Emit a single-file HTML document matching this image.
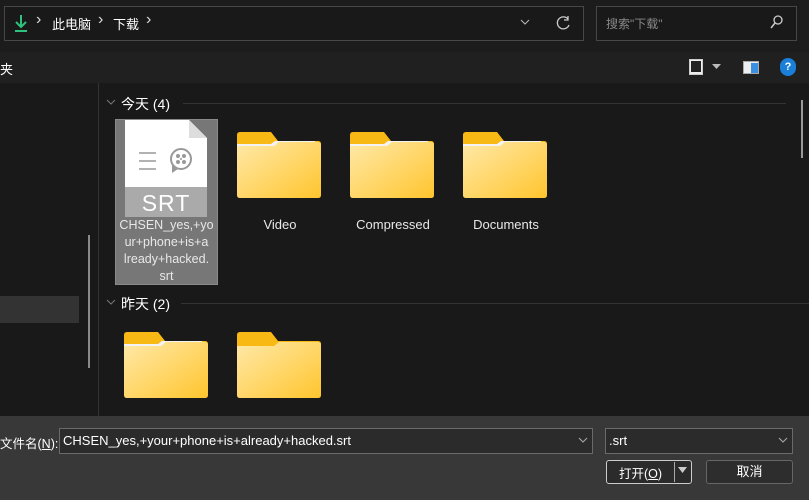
<!DOCTYPE html>
<html><head><meta charset="utf-8"><style>
*{margin:0;padding:0;box-sizing:border-box}
body{width:809px;height:500px;background:#191919;font-family:"Liberation Sans","Noto Sans CJK SC",sans-serif;color:#fff;position:relative;overflow:hidden;font-size:13px}
.a{position:absolute}
.folder{position:absolute;width:84px;height:66px}
.lbl{position:absolute;font-size:13px;color:#e8e8e8;text-align:center}
.ch{position:absolute;font-size:16px;color:#ddd;top:11px}
</style></head><body>
<svg width="0" height="0" style="position:absolute"><defs><linearGradient id="g" x1="0" y1="0" x2="1" y2="1"><stop offset="0" stop-color="#ffe9a8"/><stop offset="1" stop-color="#ffc52e"/></linearGradient></defs></svg>
<div class="a" style="left:0;top:0;width:809px;height:52px;background:#1c1c1c"></div>
<div class="a" style="left:4px;top:6px;width:580px;height:35px;border:1px solid #474747;background:#191919"></div>
<svg class="a" style="left:13px;top:13px" width="16" height="20"><path d="M8 2v11M3 9l5 5 5-5" stroke="#2ec27e" stroke-width="2" fill="none"/><path d="M2 18h12" stroke="#2ec27e" stroke-width="2"/></svg>
<div class="ch" style="left:36px">›</div>
<div class="a" style="left:52px;top:14px;font-size:13px">此电脑</div>
<div class="ch" style="left:98px">›</div>
<div class="a" style="left:113px;top:14px;font-size:13px">下载</div>
<div class="ch" style="left:146px">›</div>
<svg class="a" style="left:520px;top:19px" width="10" height="8"><path d="M1 1l4 4 4-4" stroke="#bbb" fill="none"/></svg>
<svg class="a" style="left:556px;top:15px" width="16" height="16"><path d="M12 4A6 6 0 1 0 13 10" stroke="#ccc" fill="none" stroke-width="1.3"/><path d="M12 1v4H8" stroke="#ccc" fill="none" stroke-width="1.3"/></svg>
<div class="a" style="left:596px;top:6px;width:201px;height:35px;border:1px solid #474747;background:#191919"></div>
<div class="a" style="left:606px;top:15px;font-size:12px;color:#888">搜索"下载"</div>
<svg class="a" style="left:770px;top:15px" width="14" height="14"><circle cx="8" cy="5" r="4" stroke="#ccc" fill="none" stroke-width="1.3"/><path d="M5 8l-4 5" stroke="#ccc" stroke-width="1.5"/></svg>
<div class="a" style="left:0;top:52px;width:809px;height:31px;background:#202020"></div>
<div class="a" style="left:0;top:59px;font-size:13px">夹</div>
<div class="a" style="left:689px;top:59px;width:14px;height:16px;border:1px solid #ccc;background:#eee"><div style="margin:1px;height:11px;background:#222"></div></div>
<svg class="a" style="left:712px;top:64px" width="10" height="6"><path d="M0 0h9L4.5 5z" fill="#bbb"/></svg>
<div class="a" style="left:743px;top:61px;width:16px;height:13px;background:#eee;border:1px solid #aaa"><div style="position:absolute;left:7px;top:1px;width:7px;height:10px;background:#3b8fe0"></div></div>
<div class="a" style="left:780px;top:58px;width:16px;height:18px;border-radius:8px;background:#1a7fd8;font-size:11px;text-align:center;line-height:18px;font-weight:bold">?</div>
<div class="a" style="left:98px;top:83px;width:1px;height:333px;background:#333"></div>
<div class="a" style="left:88px;top:235px;width:2px;height:133px;background:#8a8a8a"></div>
<div class="a" style="left:0;top:296px;width:79px;height:27px;background:#333"></div>
<div class="a" style="left:801px;top:100px;width:2px;height:58px;background:#999"></div>
<svg class="a" style="left:106px;top:99px" width="10" height="8"><path d="M1 1l4 4 4-4" stroke="#777" fill="none"/></svg>
<div class="a" style="left:121px;top:94px;font-size:14px">今天 (4)</div>
<div class="a" style="left:183px;top:103px;width:603px;height:1px;background:#333"></div>
<svg class="a" style="left:106px;top:299px" width="10" height="8"><path d="M1 1l4 4 4-4" stroke="#777" fill="none"/></svg>
<div class="a" style="left:121px;top:294px;font-size:14px">昨天 (2)</div>
<div class="a" style="left:181px;top:303px;width:628px;height:1px;background:#333"></div>
<!-- selected file -->
<div class="a" style="left:115px;top:119px;width:103px;height:166px;background:#777;border:1px solid #8a8a8a"></div>
<svg class="a" style="left:125px;top:120px" width="82" height="97"><path d="M0 0h64l18 18v49H0z" fill="#fff"/><path d="M64 0v18h18z" fill="#ddd"/><rect x="0" y="67" width="82" height="30" fill="#aaa"/><path d="M14 33h17M14 41h17M14 49h17" stroke="#999" stroke-width="1.6"/><circle cx="56" cy="39" r="10" fill="none" stroke="#999" stroke-width="2"/><path d="M47 43v10l6-4" fill="#999"/><circle cx="53" cy="36" r="2" fill="#999"/><circle cx="59" cy="36" r="2" fill="#999"/><circle cx="53" cy="42" r="2" fill="#999"/><circle cx="59" cy="42" r="2" fill="#999"/><circle cx="56" cy="39" r="1" fill="#999"/><text x="41" y="91" font-size="23" fill="#fff" text-anchor="middle" font-family="Liberation Sans" letter-spacing="1">SRT</text></svg>
<div class="lbl" style="left:116px;top:217px;width:101px;line-height:17px;font-size:12.5px">CHSEN_yes,+yo ur+phone+is+a lready+hacked. srt</div>
<svg class="folder" style="left:237px;top:132px" viewBox="0 0 84 66"><path d="M0 3q0-3 3-3h31l7 9h40q3 0 3 3v8H0z" fill="#f9b914"/><path d="M0 12h34l4-3h40v10H0z" fill="#f3f3f3"/><path d="M0 14h37l5-4h39q3 0 3 3v50q0 3-3 3H3q-3 0-3-3z" fill="url(#g)"/></svg>
<svg class="folder" style="left:350px;top:132px" viewBox="0 0 84 66"><path d="M0 3q0-3 3-3h31l7 9h40q3 0 3 3v8H0z" fill="#f9b914"/><path d="M0 12h34l4-3h40v10H0z" fill="#f3f3f3"/><path d="M0 14h37l5-4h39q3 0 3 3v50q0 3-3 3H3q-3 0-3-3z" fill="url(#g)"/></svg>
<svg class="folder" style="left:463px;top:132px" viewBox="0 0 84 66"><path d="M0 3q0-3 3-3h31l7 9h40q3 0 3 3v8H0z" fill="#f9b914"/><path d="M0 12h34l4-3h40v10H0z" fill="#f3f3f3"/><path d="M0 14h37l5-4h39q3 0 3 3v50q0 3-3 3H3q-3 0-3-3z" fill="url(#g)"/></svg>
<svg class="folder" style="left:124px;top:332px" viewBox="0 0 84 66"><path d="M0 3q0-3 3-3h31l7 9h40q3 0 3 3v8H0z" fill="#f9b914"/><path d="M0 12h34l4-3h40v10H0z" fill="#f3f3f3"/><path d="M0 14h37l5-4h39q3 0 3 3v50q0 3-3 3H3q-3 0-3-3z" fill="url(#g)"/></svg>
<svg class="folder" style="left:237px;top:332px" viewBox="0 0 84 66"><path d="M0 3q0-3 3-3h31l7 9h40q3 0 3 3v8H0z" fill="#f9b914"/><path d="M0 14h37l5-4h39q3 0 3 3v50q0 3-3 3H3q-3 0-3-3z" fill="url(#g)"/></svg>
<div class="lbl" style="left:240px;top:217px;width:80px">Video</div>
<div class="lbl" style="left:343px;top:217px;width:100px">Compressed</div>
<div class="lbl" style="left:456px;top:217px;width:100px">Documents</div>
<!-- bottom -->
<div class="a" style="left:0;top:416px;width:809px;height:84px;background:#383838"></div>
<div class="a" style="left:0;top:433px;font-size:12.5px">文件名(<u>N</u>):</div>
<div class="a" style="left:59px;top:428px;width:534px;height:26px;border:1px solid #6a6a6a;background:#2b2b2b"></div>
<div class="a" style="left:63px;top:433px;font-size:13px">CHSEN_yes,+your+phone+is+already+hacked.srt</div>
<svg class="a" style="left:578px;top:437px" width="10" height="8"><path d="M1 1l4 4 4-4" stroke="#aaa" fill="none"/></svg>
<div class="a" style="left:605px;top:428px;width:188px;height:26px;border:1px solid #6a6a6a;background:#2b2b2b"></div>
<div class="a" style="left:609px;top:433px;font-size:13px">.srt</div>
<svg class="a" style="left:778px;top:437px" width="10" height="8"><path d="M1 1l4 4 4-4" stroke="#aaa" fill="none"/></svg>
<div class="a" style="left:606px;top:460px;width:86px;height:24px;border:1px solid #ccc;border-radius:3px;background:#2b2b2b"></div>
<div class="a" style="left:619px;top:463px;font-size:12.5px">打开(<u>O</u>)</div>
<div class="a" style="left:674px;top:462px;width:1px;height:20px;background:#aaa"></div>
<svg class="a" style="left:678px;top:467px" width="10" height="7"><path d="M0 0h9L4.5 6z" fill="#ccc"/></svg>
<div class="a" style="left:706px;top:460px;width:87px;height:24px;border:1px solid #666;border-radius:3px;background:#2d2d2d;text-align:center;line-height:22px;font-size:13px">取消</div>
</body></html>
